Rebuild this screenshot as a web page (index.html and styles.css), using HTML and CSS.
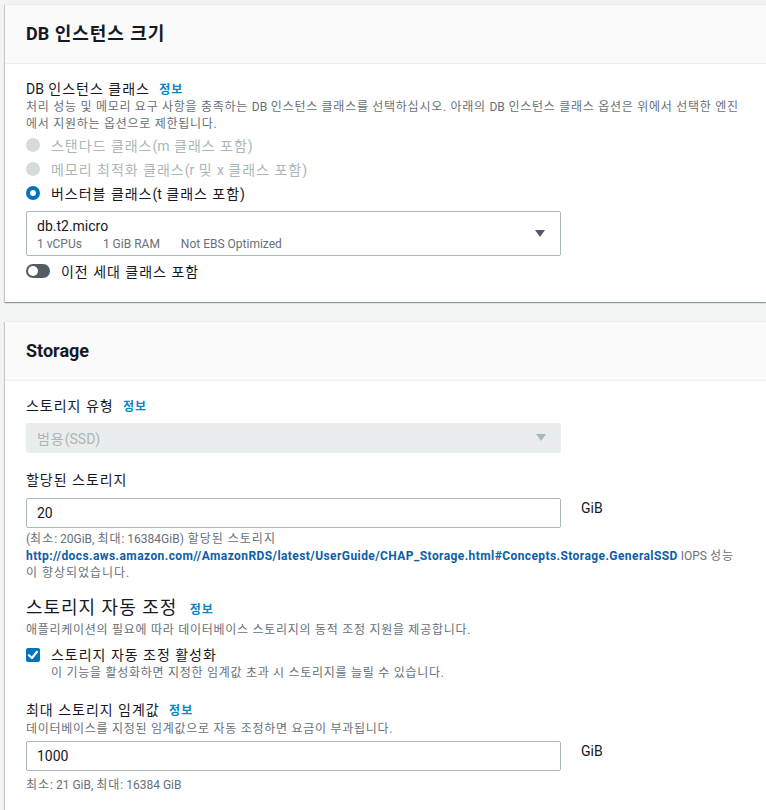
FILE: index.html
```html
<!DOCTYPE html>
<html lang="ko">
<head>
<meta charset="utf-8">
<link rel="stylesheet" href="styles.css">
</head>
<body>
<div class="page">
  <section class="card">
    <header class="card-head"><h2 class="card-title"><span class="l">DB</span> 인스턴스 크기</h2></header>
    <div class="card-body card-body-1">
      <div class="label"><span class="l">DB</span> 인스턴스 클래스 <a class="info">정보</a></div>
      <div class="desc">처리 성능 및 메모리 요구 사항을 충족하는 <span class="l">DB</span> 인스턴스 클래스를 선택하십시오. 아래의 <span class="l">DB</span> 인스턴스 클래스 옵션은 위에서 선택한 엔진에서 지원하는 옵션으로 제한됩니다.</div>
      <div class="radios">
        <div class="radio-row disabled"><span class="radio"></span><span>스탠다드 클래스<span class="l">(m</span> 클래스 포함<span class="l">)</span></span></div>
        <div class="radio-row disabled"><span class="radio"></span><span>메모리 최적화 클래스<span class="l">(r</span> 및 <span class="l">x</span> 클래스 포함<span class="l">)</span></span></div>
        <div class="radio-row"><span class="radio checked"></span><span>버스터블 클래스<span class="l">(t</span> 클래스 포함<span class="l">)</span></span></div>
      </div>
      <div class="select tall">
        <div class="select-text">
          <div class="sel-main">db.t2.micro</div>
          <div class="sel-tags"><span>1 vCPUs</span><span>1 GiB RAM</span><span>Not EBS Optimized</span></div>
        </div>
        <svg class="caret" width="10" height="8" viewBox="0 0 10 8"><polygon points="0,0 10,0 5,7" fill="#545b64"/></svg>
      </div>
      <div class="toggle-row"><span class="toggle"><span class="knob"></span></span><span>이전 세대 클래스 포함</span></div>
    </div>
  </section>

  <section class="card card-2">
    <header class="card-head"><h2 class="card-title l">Storage</h2></header>
    <div class="card-body card-body-2">
      <div class="label">스토리지 유형 <a class="info">정보</a></div>
      <div class="select disabled-select">
        <span class="sel-disabled-text">범용<span class="l">(SSD)</span></span>
        <svg class="caret" width="10" height="8" viewBox="0 0 10 8"><polygon points="0,0 10,0 5,7" fill="#aab7b8"/></svg>
      </div>

      <div class="label label-2">할당된 스토리지</div>
      <div class="input-row">
        <div class="input">20</div>
        <span class="unit">GiB</span>
      </div>
      <div class="help"><span class="l">(</span>최소<span class="l">: 20GiB, </span>최대<span class="l">: 16384GiB)</span> 할당된 스토리지 <a class="help-link">http://docs.aws.amazon.com//AmazonRDS/latest/UserGuide/CHAP_Storage.html#Concepts.Storage.GeneralSSD</a><span class="l"> IOPS </span>성능이 향상되었습니다.</div>

      <h3 class="sub-title">스토리지 자동 조정 <a class="info">정보</a></h3>
      <div class="desc">애플리케이션의 필요에 따라 데이터베이스 스토리지의 동적 조정 지원을 제공합니다.</div>
      <div class="check-row">
        <span class="checkbox"><svg width="14" height="14" viewBox="0 0 14 14"><polyline points="3,7.2 6,10 11,3.8" fill="none" stroke="#fff" stroke-width="2.2" stroke-linecap="round" stroke-linejoin="round"/></svg></span>
        <div class="check-text">
          <div class="check-label">스토리지 자동 조정 활성화</div>
          <div class="desc">이 기능을 활성화하면 지정한 임계값 초과 시 스토리지를 늘릴 수 있습니다.</div>
        </div>
      </div>

      <div class="label label-3">최대 스토리지 임계값 <a class="info">정보</a></div>
      <div class="desc desc-3">데이터베이스를 지정된 임계값으로 자동 조정하면 요금이 부과됩니다.</div>
      <div class="input-row input-row-3">
        <div class="input">1000</div>
        <span class="unit">GiB</span>
      </div>
      <div class="help help-3">최소<span class="l">: 21 GiB, </span>최대<span class="l">: 16384 GiB</span></div>
    </div>
  </section>
</div>
</body>
</html>
```

FILE: styles.css
```css
* { box-sizing: border-box; }
html, body { margin: 0; padding: 0; }
body {
  background: #f2f3f3;
  font-family: Roboto, "Noto Sans CJK KR", sans-serif;
  color: #16191f;
  font-size: 14px;
  letter-spacing: 0.07em;
  overflow: hidden;
}
.l { letter-spacing: 0; }
.page {
  padding: 4px 0 0 5px;
}
.card {
  background: #fff;
  border-top: 1px solid #eaeded;
  box-shadow: 0 1px 1px 0 rgba(0, 28, 36, 0.3), -1px 1px 1px 0 rgba(0, 28, 36, 0.15);
}
.card-2 { margin-top: 19px; }
.card-head {
  background: #fafafa;
  border-bottom: 1px solid #eaeded;
  padding: 17px 20px 17px 21px;
}
.card-title {
  margin: 0;
  font-size: 18px;
  line-height: 24px;
  font-weight: 700;
}
.card-body {
  padding: 16px 22px 20px 21px;
}
.card-body-2 { padding-bottom: 40px; }
.label {
  font-size: 14px;
  line-height: 18px;
}
.info {
  color: #0a87c2;
  font-size: 12px;
  font-weight: 700;
  margin-left: 5px;
}
.desc {
  font-size: 12px;
  line-height: 17px;
  color: #687078;
  letter-spacing: 0.06em;
}
.desc .l { letter-spacing: 0; }
.radios {
  display: flex;
  flex-direction: column;
}
.radio-row {
  display: flex;
  align-items: center;
  height: 24px;
  gap: 11px;
  font-size: 14px;
}
.radio-row.disabled { color: #aab7b8; }
.radio {
  width: 14px;
  height: 14px;
  border-radius: 50%;
  background: #d5dbdb;
  flex: none;
}
.radio.checked {
  background: #fff;
  border: 4px solid #0073bb;
}
.select {
  width: 535px;
  display: flex;
  align-items: center;
  justify-content: space-between;
  border-radius: 2px;
}
.select.tall {
  margin-top: 6px;
  border: 1px solid #aab7b8;
  padding: 4px 15px 3px 10px;
}
.sel-main {
  font-size: 14px;
  line-height: 20px;
  letter-spacing: 0;
}
.sel-tags {
  font-size: 12px;
  line-height: 16px;
  color: #687078;
  display: flex;
  gap: 21px;
  letter-spacing: 0;
}
.caret { flex: none; }
.toggle-row {
  margin-top: 4px;
  display: flex;
  align-items: center;
  gap: 11px;
  height: 22px;
  font-size: 14px;
}
.toggle {
  width: 24px;
  height: 14px;
  border-radius: 7px;
  background: #545b64;
  padding: 2px;
  display: flex;
  flex: none;
}
.knob {
  width: 10px;
  height: 10px;
  border-radius: 50%;
  background: #fff;
}
.disabled-select {
  margin-top: 7px;
  height: 30px;
  background: #eaeded;
  padding: 0 15px 0 11px;
}
.sel-disabled-text {
  color: #aab7b8;
  font-size: 14px;
}
.label-2 { margin-top: 18px; }
.input-row {
  margin-top: 9px;
  display: flex;
  align-items: flex-start;
  gap: 20px;
  letter-spacing: 0;
}
.input {
  width: 535px;
  height: 30px;
  border: 1px solid #aab7b8;
  border-radius: 2px;
  padding: 0 10px;
  font-size: 14px;
  line-height: 28px;
}
.unit {
  font-size: 14px;
  line-height: 20px;
}
.help {
  margin-top: 3px;
  font-size: 12px;
  line-height: 17px;
  color: #687078;
}
.help-link {
  color: #0b5ea8;
  font-weight: 700;
  letter-spacing: 0.42px;
}
.sub-title {
  margin: 14px 0 0;
  font-size: 18px;
  line-height: 24px;
  font-weight: 400;
}
.sub-title .info { margin-left: 7px; }
.check-row {
  margin-top: 6px;
  display: flex;
  align-items: flex-start;
  gap: 11px;
}
.checkbox {
  margin-top: 3px;
  width: 14px;
  height: 14px;
  border-radius: 2px;
  background: #0073bb;
  display: flex;
  flex: none;
}
.check-label {
  font-size: 14px;
  line-height: 20px;
}
.label-3 { margin-top: 19px; }
.desc-3 { margin-top: 1px; }
.input-row-3 { margin-top: 3px; }
.help-3 { margin-top: 6px; }
```
